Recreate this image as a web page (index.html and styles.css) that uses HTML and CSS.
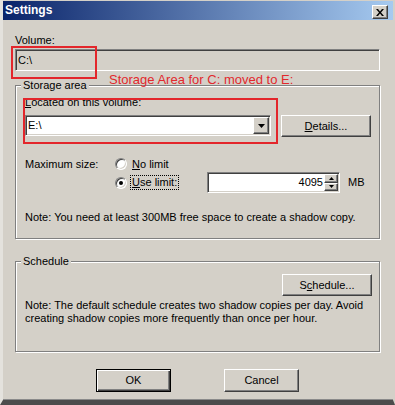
FILE: index.html
```html
<!DOCTYPE html>
<html>
<head>
<meta charset="utf-8">
<link rel="stylesheet" href="styles.css">
</head>
<body>
<div class="window">
  <div class="titlebar">
    <span class="title">Settings</span>
    <span class="close"><svg width="8" height="7" viewBox="0 0 8 7"><path d="M0 0h2l2 2.5L6 0h2L5 3.5 8 7H6L4 4.5 2 7H0l3-3.5z" fill="#000"/></svg></span>
  </div>
  <div class="content">
    <div class="vol-label">Volume:</div>
    <div class="field sunken">C:\</div>

    <div class="group storage">
      <div class="group-title">Storage area</div>
      <div class="located"><u>L</u>ocated on this volume:</div>
      <div class="combo-row">
        <div class="combo sunken">
          <span class="combo-text">E:\</span>
          <span class="drop raised"><svg width="7" height="4" viewBox="0 0 7 4"><path d="M0 0h7L3.5 4z" fill="#000"/></svg></span>
        </div>
        <button class="btn details"><u>D</u>etails...</button>
      </div>
      <div class="size-grid">
        <div class="size-label">Maximum size:</div>
        <div class="radio-row r1"><span class="radio"></span><span class="rtext"><u>N</u>o limit</span></div>
        <div class="radio-row r2"><span class="radio checked"></span><span class="rtext focus"><u>U</u>se limit:</span></div>
        <div class="spin sunken">
          <span class="spin-val">4095</span>
          <span class="spin-btns">
            <span class="spin-btn raised"><svg width="5" height="3" viewBox="0 0 5 3"><path d="M2.5 0L5 3H0z" fill="#000"/></svg></span>
            <span class="spin-btn raised"><svg width="5" height="3" viewBox="0 0 5 3"><path d="M0 0h5L2.5 3z" fill="#000"/></svg></span>
          </span>
        </div>
        <div class="mb">MB</div>
      </div>
      <div class="note">Note: You need at least 300MB free space to create a shadow copy.</div>
    </div>

    <div class="group schedule">
      <div class="group-title">Schedule</div>
      <div class="sched-row"><button class="btn sched">S<u>c</u>hedule...</button></div>
      <div class="note sched-note">Note: The default schedule creates two shadow copies per day. Avoid<br>creating shadow copies more frequently than once per hour.</div>
    </div>

    <div class="buttons">
      <button class="btn ok">OK</button>
      <button class="btn cancel">Cancel</button>
    </div>
  </div>

  <div class="ann ann-box1"></div>
  <div class="ann ann-box2"></div>
  <div class="ann-text">Storage Area for C: moved to E:</div>
</div>
</body>
</html>
```

FILE: styles.css
```css
* { box-sizing: border-box; }
html, body { margin: 0; padding: 0; background: #d4d0c8; }
body {
  width: 395px; height: 405px; overflow: hidden;
  font-family: "Liberation Sans", Arial, sans-serif;
  font-size: 11px; line-height: 13px; color: #000;
}
.window {
  position: relative;
  width: 395px; height: 405px;
  padding-top: 1px;
  background: #d4d0c8;
  border-left: 3px solid #e4e2dd;
  border-right: 2px solid #d4d0c8;
  border-bottom: 5px solid #4c4c4c;
  box-shadow: inset 0 -1px 0 #8a8a8a;
}
.titlebar {
  height: 19px;
  display: flex; align-items: flex-start;
  padding: 0 5px 0 2px;
  background: linear-gradient(to right, #0a246a, #a6caf0);
}
.title { color: #fff; font-weight: bold; font-size: 12px; line-height: 19px; }
.close {
  margin-left: auto; margin-top: 4px;
  width: 16px; height: 14px;
  display: flex; align-items: center; justify-content: center;
}
.raised, .close {
  background: #d4d0c8;
  border: 1px solid; border-color: #fff #404040 #404040 #fff;
  box-shadow: inset -1px -1px #808080;
}
.sunken {
  border: 1px solid; border-color: #808080 #fff #fff #808080;
  box-shadow: inset 1px 1px #404040, inset -1px -1px #d4d0c8;
}
.content { padding: 0 13px 0 12px; }
.vol-label { margin-top: 14px; }
.field { margin-top: 2px; height: 22px; line-height: 20px; padding-left: 2px; }

.group {
  border: 1px solid #808080;
  box-shadow: inset 1px 1px #fff, 1px 1px #fff;
  padding: 0 7px 0 9px;
}
.group-title {
  width: fit-content;
  margin: -7px 0 0 -4px;
  padding: 0 2px;
  background: #d4d0c8;
}
.storage { margin-top: 14px; padding-bottom: 14px; }
.located { margin-top: 4px; }
.combo-row { margin-top: 6px; display: flex; align-items: flex-start; }
.combo { width: 246px; height: 21px; background: #fff; display: flex; padding: 1px; }
.combo-text { flex: 1; line-height: 17px; padding-left: 1px; }
.drop { width: 16px; height: 17px; display: flex; align-items: center; justify-content: center; }

.btn {
  font: inherit; color: #000;
  width: 90px; height: 22px; padding: 0; margin: 0;
  background: #d4d0c8;
  border: 1px solid; border-color: #fff #404040 #404040 #fff;
  box-shadow: inset -1px -1px #808080;
  display: flex; align-items: center; justify-content: center;
}
.details { margin-left: 10px; }

.size-grid {
  margin-top: 19px;
  display: grid;
  grid-template-columns: 90px 92px 133px auto;
  grid-template-rows: 16px 21px;
  align-items: center;
}
.size-label { grid-column: 1; grid-row: 1; }
.radio-row { display: flex; align-items: center; gap: 3px; }
.r1 { grid-column: 2 / 5; grid-row: 1; }
.r2 { grid-column: 2; grid-row: 2; }
.radio {
  position: relative;
  width: 12px; height: 12px; border-radius: 50%;
  background: #fff;
  border: 1px solid; border-color: #808080 #fff #fff #808080;
  box-shadow: inset 1px 1px #404040, inset -1px -1px #d4d0c8;
}
.radio.checked::after {
  content: ""; position: absolute; left: 3px; top: 3px;
  width: 4px; height: 4px; border-radius: 50%; background: #000;
}
.rtext { padding: 0 1px; border: 1px dotted transparent; }
.rtext.focus { border-color: #000; }
.spin { grid-column: 3; grid-row: 2; height: 21px; background: #fff; display: flex; padding: 1px; }
.spin-val { flex: 1; text-align: right; line-height: 17px; padding-right: 1px; }
.spin-btns { width: 14px; display: flex; flex-direction: column; }
.spin-btn { flex: 1; display: flex; align-items: center; justify-content: center; }
.mb { grid-column: 4; grid-row: 2; padding-left: 8px; }
.note { margin-top: 18px; white-space: nowrap; }

.schedule { margin-top: 22px; padding-bottom: 26px; }
.sched-row { margin-top: 6px; display: flex; justify-content: flex-end; }
.sched-note { margin-top: 3px; }

.buttons { margin-top: 17px; display: flex; justify-content: center; gap: 53px; }
.ok, .cancel { width: 75px; height: 23px; }
.ok {
  border: 1px solid #000;
  box-shadow: inset 1px 1px #fff, inset -1px -1px #404040, inset -2px -2px #808080;
}

.ann { position: absolute; border: 2px solid #e3262b; }
.ann-box1 { left: 8px; top: 46px; width: 86px; height: 33px; }
.ann-box2 { left: 20px; top: 98px; width: 255px; height: 46px; }
.ann-text {
  position: absolute; left: 106px; top: 72px;
  color: #e2282d; font-size: 13px; line-height: 15px;
}
```
